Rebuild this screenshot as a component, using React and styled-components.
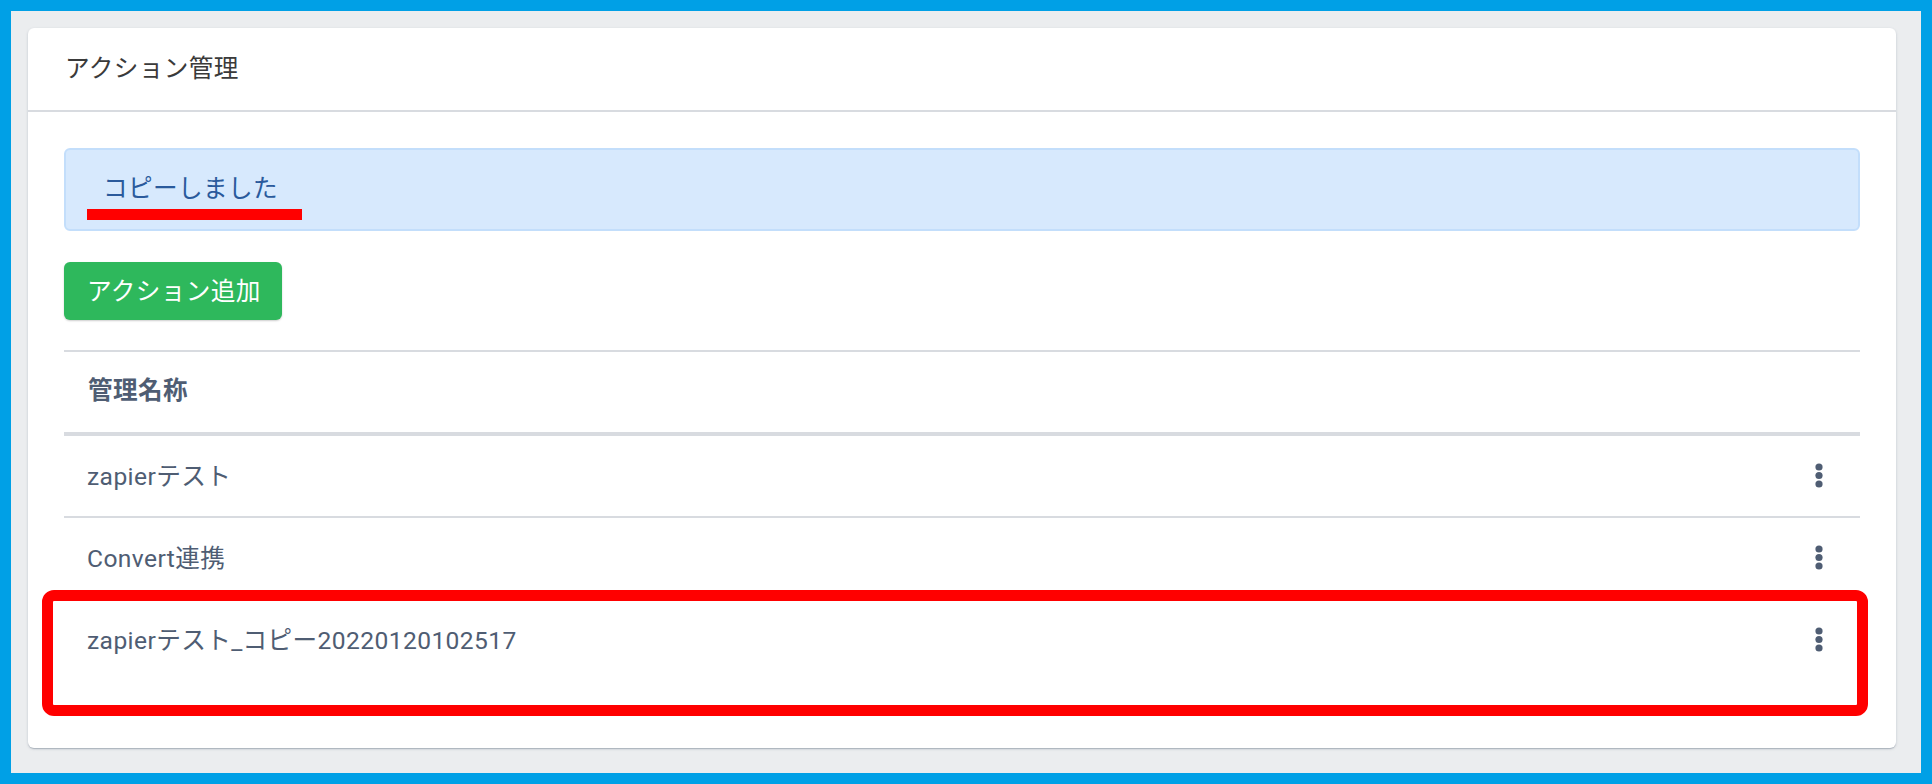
import React from "react";
import styled, { createGlobalStyle } from "styled-components";

const GlobalStyle = createGlobalStyle`
  body {
    margin: 0;
    font-family: "Roboto", "Noto Sans CJK JP", sans-serif;
    letter-spacing: 0.4px;
  }
`;

const Frame = styled.div`
  box-sizing: border-box;
  width: 1932px;
  height: 784px;
  border: 11px solid #00a0e6;
  background: #ebedef;
  padding: 17px 25px 14px 17px;
`;

const Card = styled.div`
  height: 720px;
  background: #fff;
  border-radius: 6px;
  box-shadow: 0 1px 1px 0 rgba(60, 75, 100, 0.14),
    0 2px 1px -1px rgba(60, 75, 100, 0.12), 0 1px 3px 0 rgba(60, 75, 100, 0.2);
  display: flex;
  flex-direction: column;
`;

const CardHeader = styled.div`
  box-sizing: border-box;
  height: 84px;
  display: flex;
  align-items: center;
  padding: 0 37px 6px;
  border-bottom: 2px solid #d8dbe0;
  font-size: 24.6px;
  color: #3a3a3a;
`;

const CardBody = styled.div`
  padding: 36px 36px 0;
`;

const Alert = styled.div`
  position: relative;
  box-sizing: border-box;
  height: 83px;
  display: flex;
  align-items: center;
  padding: 0 0 8px 37px;
  background: #d7e9fd;
  border: 2px solid #c3defb;
  border-radius: 6px;
  color: #2a5a9c;
  font-size: 24.6px;
`;

const Underline = styled.span`
  position: absolute;
  left: 21px;
  top: 59px;
  width: 215px;
  height: 11px;
  background: #ff0000;
`;

const AddButton = styled.button`
  margin-top: 31px;
  height: 58px;
  padding: 0 21px 5px 23px;
  border: none;
  border-radius: 6px;
  background: #2eb85c;
  color: #fff;
  font-family: inherit;
  letter-spacing: inherit;
  font-size: 24.6px;
  box-shadow: 0 1px 2px rgba(0, 0, 0, 0.2);
`;

const Table = styled.div`
  margin-top: 30px;
  border-top: 2px solid #d8dbe0;
`;

const HeadRow = styled.div`
  box-sizing: border-box;
  height: 84px;
  display: flex;
  align-items: center;
  padding: 0 24px 8px;
  border-bottom: 4px solid #d8dbe0;
  font-size: 24.6px;
  font-weight: 700;
  color: #4f5d73;
`;

const Row = styled.div`
  position: relative;
  height: 80px;
  display: flex;
  align-items: center;
  justify-content: space-between;
  padding: 0 37px 0 23px;
  border-top: ${(p) => (p.$first ? "none" : "2px solid #d8dbe0")};
  font-size: 24.6px;
  color: #4f5d73;
`;

const Name = styled.span`
  padding-bottom: 4px;
`;

const Highlight = styled.div`
  position: absolute;
  left: -22px;
  right: -8px;
  top: -10px;
  bottom: -36px;
  border: 11px solid #ff0000;
  border-radius: 12px;
  pointer-events: none;
`;

const Dots = () => (
  <svg width="8" height="26" viewBox="0 0 8 26">
    <circle cx="4" cy="4" r="3.6" fill="#4f5d73" />
    <circle cx="4" cy="12.5" r="3.6" fill="#4f5d73" />
    <circle cx="4" cy="21" r="3.6" fill="#4f5d73" />
  </svg>
);

const rows = ["zapierテスト", "Convert連携", "zapierテスト_コピー20220120102517"];

const App = () => (
  <Frame>
    <GlobalStyle />
    <Card>
      <CardHeader>アクション管理</CardHeader>
      <CardBody>
        <Alert>
          コピーしました
          <Underline />
        </Alert>
        <AddButton>アクション追加</AddButton>
        <Table>
          <HeadRow>管理名称</HeadRow>
          {rows.map((name, i) => (
            <Row key={name} $first={i === 0}>
              <Name>{name}</Name>
              <Dots />
              {i === rows.length - 1 && <Highlight />}
            </Row>
          ))}
        </Table>
      </CardBody>
    </Card>
  </Frame>
);

export default App;
